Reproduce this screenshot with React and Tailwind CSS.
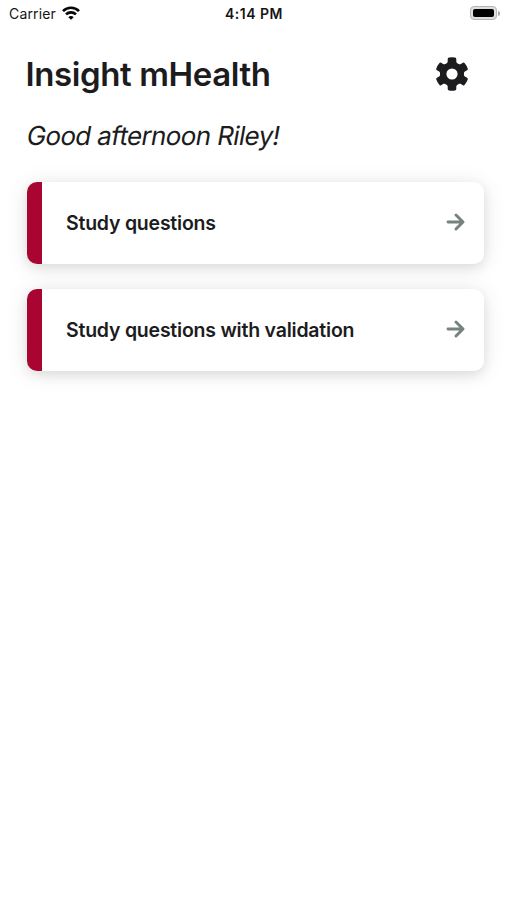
import React from "react";

function StatusBar() {
  return (
    <div className="grid h-[26px] grid-cols-3 items-center pl-[9px] pr-[7px] text-[14px] text-[#151515]">
      <div className="flex items-center gap-[6px]">
        <span className="tracking-[0.15px]">Carrier</span>
        <svg width="18" height="14" viewBox="0 0 18 14" fill="none" stroke="#080808" strokeWidth="2.7">
          <path d="M1 5.1C5.5.6 12.5.6 17 5.1" />
          <path d="M4 8.4C6.8 5.7 11.2 5.7 14 8.4" />
          <path d="M6.3 11.2C7.8 9.7 10.2 9.7 11.7 11.2L9 13.8Z" fill="#080808" stroke="none" />
        </svg>
      </div>
      <span className="-ml-px text-center font-semibold tracking-[0.5px]">4:14 PM</span>
      <div className="flex items-center justify-end gap-px">
        <div className="h-[14px] w-[27px] rounded-[4px] border border-[#b5b5b5] bg-[#dedede] p-[2px]">
          <div className="h-full rounded-[2px] bg-black" />
        </div>
        <div className="h-[5px] w-[2px] rounded-r-full bg-[#aaa]" />
      </div>
    </div>
  );
}

function Gear() {
  return (
    <svg width="40" height="40" viewBox="-20 -20 40 40" fill="#1c1c1e">
      <path fillRule="evenodd" d="M0-12A12 12 0 1 1 0 12A12 12 0 1 1 0-12ZM0-5.6A5.6 5.6 0 1 0 0 5.6A5.6 5.6 0 1 0 0-5.6Z" />
      {[0, 60, 120, 180, 240, 300].map((angle) => (
        <path key={angle} transform={`rotate(${angle})`} d="M-5.6-9.5L-4.3-12.3V-15Q-4.2-16.2-3-16.4Q0-17 3-16.4Q4.2-16.2 4.3-15V-12.3L5.6-9.5Z" />
      ))}
    </svg>
  );
}

function Card({ label }) {
  return (
    <button className="flex h-[82px] w-full items-center overflow-hidden rounded-[10px] bg-white pr-[19px] text-left shadow-[0_4px_12px_rgba(0,0,0,0.09),0_2px_24px_rgba(0,0,0,0.09)]">
      <span className="h-full w-[15px] bg-[#a90533]" />
      <span className="ml-[24.5px] flex-1 whitespace-nowrap pt-px text-[19.5px] font-semibold tracking-[-0.22px]">{label}</span>
      <svg className="mb-[2px]" width="19" height="18" viewBox="0 0 19 18" fill="none" stroke="#75827e" strokeWidth="2.9" strokeLinecap="round" strokeLinejoin="round">
        <path d="M2 9H17M10 2L17 9L10 16" />
      </svg>
    </button>
  );
}

export default function App() {
  return (
    <div className="h-[900px] w-[507px] overflow-hidden bg-white font-['Inter',sans-serif] text-[#1c1c1e]">
      <StatusBar />
      <main className="pl-[26.5px] pr-[23.5px]">
        <header className="flex h-[96px] items-center justify-between pr-[12px]">
          <h1 className="-ml-px whitespace-nowrap pt-px text-[33px] font-semibold tracking-[-0.4px]">Insight mHealth</h1>
          <Gear />
        </header>
        <p className="-mt-[4px] h-9 origin-left -skew-x-[10deg] whitespace-nowrap text-[26px] leading-9 tracking-[-0.63px]">Good afternoon Riley!</p>
        <div className="mt-7 flex flex-col gap-[25px]">
          <Card label="Study questions" />
          <Card label="Study questions with validation" />
        </div>
      </main>
    </div>
  );
}
